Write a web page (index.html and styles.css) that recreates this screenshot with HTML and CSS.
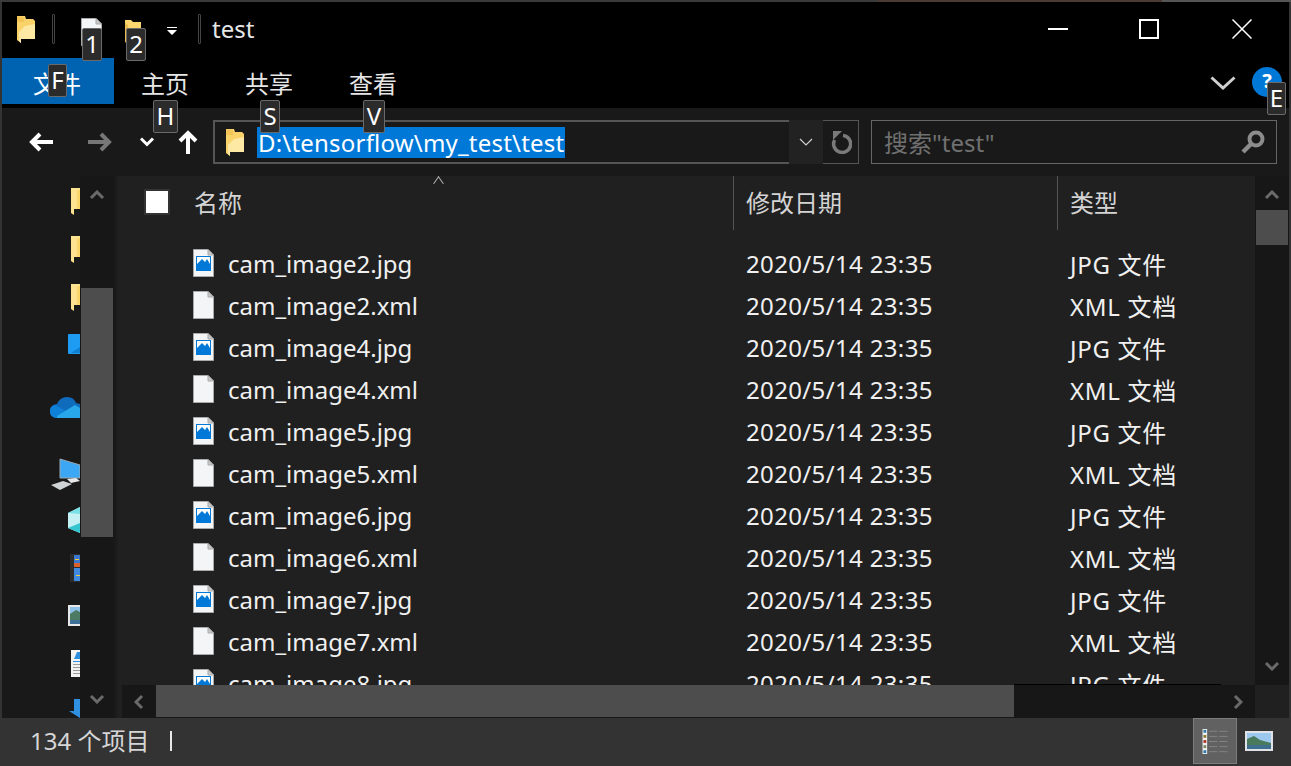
FILE: index.html
```html
<!DOCTYPE html>
<html lang="zh-CN">
<head>
    <meta charset="UTF-8">
    <title>test</title>
    <link rel="stylesheet" href="styles.css">
</head>
<body>
    <svg class="defs" width="0" height="0">
        <symbol id="file" viewBox="0 0 21 28">
            <path d="M.5.5H15L20.5 6V27.500H.5Z" fill="#f4f5f7" stroke="#a9a9a9"/>
            <path d="M15 .5V6H20.500Z" fill="#c9c9c9" stroke="#a9a9a9"/>
        </symbol>
        <symbol id="image" viewBox="0 0 21 28">
            <path d="M.5.5H15L20.5 6V27.500H.5Z" fill="#f4f5f7" stroke="#a9a9a9"/>
            <path d="M15 .5V6H20.500Z" fill="#c9c9c9" stroke="#a9a9a9"/>
            <path d="M3 7H18V22H3Z" fill="#0078d7"/>
            <path d="M4 8H17V15L14 10 12 13 9 10 4 15Z" fill="#fff"/>
        </symbol>
        <symbol id="folder" viewBox="0 0 18 27">
            <path d="M0 0H8L9 3H16L18 5V23H4V27L0 24Z" fill="#f9d36a"/>
            <path d="M8 10 18 8V23H4V27L2 25V16Z" fill="#fde9a4"/>
            <path d="M0 0 7 2V6L0 6Z" fill="#f2c455"/>
        </symbol>
        <symbol id="side-folder" viewBox="0 0 9 27">
            <path d="M0 0H9V21H3V27L0 25Z" fill="#fde292"/>
            <path d="M6 2H9V21H6Z" fill="#fbd568"/>
        </symbol>
        <symbol id="chevron" viewBox="0 0 16 10">
            <path d="M2 2 8 8 14 2" fill="none" stroke="currentColor" stroke-width="3"/>
        </symbol>
    </svg>

    <div class="edge-top"></div>
    <div class="window">
        <header class="titlebar">
            <svg class="title-folder"><use href="#folder"/></svg>
            <span class="qa-sep"></span>
            <svg class="qa-file"><use href="#file"/></svg>
            <svg class="qa-folder" viewBox="0 0 16 24">
                <path d="M0 0H6L8 2H16V14H0Z" fill="#fbd66e"/>
                <path d="M0 3 3 5V24L0 22Z" fill="#e9bb50"/>
            </svg>
            <svg class="qa-drop" viewBox="0 0 12 9">
                <path d="M1 0H11V1H1Z M1 3H11L6 8Z" fill="#fff"/>
            </svg>
            <span class="qa-sep qa-sep-last"></span>
            <span class="title-text">test</span>
            <div class="winbtns">
                <svg class="winbtn" viewBox="0 0 20 20"><path d="M0 10H20" stroke="#fff" stroke-width="2"/></svg>
                <svg class="winbtn" viewBox="0 0 20 20"><path d="M1 1H19V19H1Z" fill="none" stroke="#fff" stroke-width="2"/></svg>
                <svg class="winbtn winbtn-close" viewBox="0 0 20 20"><path d="M.5.5 19.500 19.500M19.500.5.5 19.500" stroke="#fff" stroke-width="1.500"/></svg>
            </div>
        </header>

        <nav class="ribbon">
            <span class="tab tab-file">文件</span>
            <span class="tab">主页</span>
            <span class="tab">共享</span>
            <span class="tab">查看</span>
            <svg class="ribbon-chevron" viewBox="0 0 26 14">
                <path d="M1.500 1.500 13 12 24.500 1.500" fill="none" stroke="#cfcfcf" stroke-width="3"/>
            </svg>
            <span class="help">?</span>
        </nav>

        <div class="navbar">
            <svg class="nav-arrow nav-back" viewBox="0 0 24 20"><path d="M24 10H3M11 2 3 10 11 18" fill="none" stroke="#fff" stroke-width="4"/></svg>
            <svg class="nav-arrow nav-forward" viewBox="0 0 24 20"><path d="M0 10H21M13 2 21 10 13 18" fill="none" stroke="#777" stroke-width="4"/></svg>
            <svg class="nav-recent" viewBox="0 0 16 10"><path d="M2 1.500 8 7.500 14 1.500" fill="none" stroke="#fff" stroke-width="3"/></svg>
            <svg class="nav-up" viewBox="0 0 20 24"><path d="M10 24V3M2 11 10 3 18 11" fill="none" stroke="#fff" stroke-width="4"/></svg>
            <div class="address">
                <svg class="address-folder"><use href="#folder"/></svg>
                <span class="address-text">D:\tensorflow\my_test\test</span>
                <span class="address-drop">
                    <svg class="address-chevron" viewBox="0 0 14 8"><path d="M1 1 7 7 13 1" fill="none" stroke="#d0d0d0" stroke-width="1.200"/></svg>
                </span>
            </div>
            <span class="refresh">
                <svg class="refresh-icon" viewBox="0 0 22 24">
                    <path d="M13 5.500A8.500 8.500 0 1 1 4.600 10" fill="none" stroke="#7a7a7a" stroke-width="3.500"/>
                    <path d="M3 1H12L3 10Z" fill="#7a7a7a"/>
                </svg>
            </span>
            <div class="search">
                <span class="search-text">搜索"test"</span>
                <svg class="search-icon" viewBox="0 0 24 24">
                    <circle cx="15" cy="9" r="6.500" fill="none" stroke="#8c8c8c" stroke-width="4"/>
                    <path d="M10 14 2 22" stroke="#8c8c8c" stroke-width="4.500"/>
                </svg>
            </div>
        </div>

        <div class="main">
            <aside class="sidebar">
                <div class="side-icons">
                    <svg class="si si-f1"><use href="#side-folder"/></svg>
                    <svg class="si si-f2"><use href="#side-folder"/></svg>
                    <svg class="si si-f2"><use href="#side-folder"/></svg>
                    <svg class="si si-desk" viewBox="0 0 12 20">
                        <path d="M0 1Q0 0 1 0H12V20H1Q0 20 0 19Z" fill="#1e9cf4"/>
                        <path d="M12 13V19H3Z" fill="#0f7fd0"/>
                    </svg>
                    <svg class="si si-cloud" viewBox="0 0 30 21">
                        <path d="M7 21Q0 21 0 14 0 8 7 7 10 0 17 0 24 0 26 6L30 7V21Z" fill="#0f6cbd"/>
                        <path d="M7 21Q0 21 0 14 0 9 5 8L18 15 10 21Z" fill="#0f80d7"/>
                        <path d="M7 21H30V11L25 8 7 19Z" fill="#28a8ea"/>
                    </svg>
                    <svg class="si si-pc" viewBox="0 0 29 32">
                        <path d="M9 1 29 7V20L9 20Z" fill="#3ba7f5" stroke="#9aa7b0"/>
                        <path d="M0 27 12 23 21 26 9 32Z" fill="#cfd3d6"/>
                        <path d="M16 21 25 20 29 23 20 25Z" fill="#e6e8ea"/>
                    </svg>
                    <svg class="si si-cube" viewBox="0 0 12 26">
                        <path d="M0 6 12 0V26L0 21Z" fill="#c5f1f4"/>
                        <path d="M0 21 12 16V26Z" fill="#37c6d0"/>
                        <path d="M0 6 12 0V7Z" fill="#7be0e6"/>
                    </svg>
                    <svg class="si si-video" viewBox="0 0 10 28">
                        <path d="M0 0H10V28H0Z" fill="#2c2c2c"/>
                        <path d="M4 1H10V13H4Z" fill="#3a78d0"/>
                        <path d="M4 9H10V13H4Z" fill="#d8602a"/>
                        <path d="M4 14H10V27H4Z" fill="#3f8ae0"/>
                        <path d="M5 5H9V6H5ZM6 21H10V22H6Z" fill="#f0d040"/>
                    </svg>
                    <svg class="si si-pic" viewBox="0 0 12 21">
                        <path d="M0 0H12V21H0Z" fill="#e8e8e8"/>
                        <path d="M2 2H12V19H2Z" fill="#8fc0e8"/>
                        <path d="M2 9 8 5 12 7V15H2Z" fill="#4c7a62"/>
                        <path d="M2 15H12V19H2Z" fill="#3e6f96"/>
                    </svg>
                    <svg class="si si-doc" viewBox="0 0 9 27">
                        <path d="M0 0H9V27H0Z" fill="#f2f2f2"/>
                        <path d="M3 9 6 2H9V9Z" fill="#2c8fe0"/>
                        <path d="M2 11H9V12H2Z" fill="#2c8fe0"/>
                        <path d="M2 14H9V15H2ZM2 17H9V18H2ZM2 20H9V21H2ZM2 23H9V24H2Z" fill="#999"/>
                    </svg>
                    <svg class="si si-down" viewBox="0 0 11 19">
                        <path d="M5 0H11V19L0 12H5Z" fill="#2f8fe0"/>
                    </svg>
                </div>
                <div class="vscroll vscroll-side">
                    <span class="sb-btn sb-btn-side"><svg class="sb-arrow sb-up"><use href="#chevron"/></svg></span>
                    <span class="sb-thumb sb-thumb-side"></span>
                    <span class="sb-fill"></span>
                    <span class="sb-btn sb-btn-side"><svg class="sb-arrow"><use href="#chevron"/></svg></span>
                </div>
            </aside>

            <section class="content">
                <div class="list-pane">
                    <div class="list-head">
                        <div class="head-cell head-name"><span class="checkbox"></span><span>名称</span><span class="sort-caret"></span></div>
                        <div class="head-cell head-date">修改日期</div>
                        <div class="head-cell head-type">类型</div>
                    </div>
                    <div class="rows">
                        <div class="row"><span class="cell-name"><svg class="file-icon"><use href="#image"/></svg>cam_image2.jpg</span><span class="cell-date">2020/5/14 23:35</span><span class="cell-type">JPG 文件</span></div>
                        <div class="row"><span class="cell-name"><svg class="file-icon"><use href="#file"/></svg>cam_image2.xml</span><span class="cell-date">2020/5/14 23:35</span><span class="cell-type">XML 文档</span></div>
                        <div class="row"><span class="cell-name"><svg class="file-icon"><use href="#image"/></svg>cam_image4.jpg</span><span class="cell-date">2020/5/14 23:35</span><span class="cell-type">JPG 文件</span></div>
                        <div class="row"><span class="cell-name"><svg class="file-icon"><use href="#file"/></svg>cam_image4.xml</span><span class="cell-date">2020/5/14 23:35</span><span class="cell-type">XML 文档</span></div>
                        <div class="row"><span class="cell-name"><svg class="file-icon"><use href="#image"/></svg>cam_image5.jpg</span><span class="cell-date">2020/5/14 23:35</span><span class="cell-type">JPG 文件</span></div>
                        <div class="row"><span class="cell-name"><svg class="file-icon"><use href="#file"/></svg>cam_image5.xml</span><span class="cell-date">2020/5/14 23:35</span><span class="cell-type">XML 文档</span></div>
                        <div class="row"><span class="cell-name"><svg class="file-icon"><use href="#image"/></svg>cam_image6.jpg</span><span class="cell-date">2020/5/14 23:35</span><span class="cell-type">JPG 文件</span></div>
                        <div class="row"><span class="cell-name"><svg class="file-icon"><use href="#file"/></svg>cam_image6.xml</span><span class="cell-date">2020/5/14 23:35</span><span class="cell-type">XML 文档</span></div>
                        <div class="row"><span class="cell-name"><svg class="file-icon"><use href="#image"/></svg>cam_image7.jpg</span><span class="cell-date">2020/5/14 23:35</span><span class="cell-type">JPG 文件</span></div>
                        <div class="row"><span class="cell-name"><svg class="file-icon"><use href="#file"/></svg>cam_image7.xml</span><span class="cell-date">2020/5/14 23:35</span><span class="cell-type">XML 文档</span></div>
                        <div class="row"><span class="cell-name"><svg class="file-icon"><use href="#image"/></svg>cam_image8.jpg</span><span class="cell-date">2020/5/14 23:35</span><span class="cell-type">JPG 文件</span></div>
                    </div>
                    <div class="hscroll">
                        <span class="hs-btn"><svg class="hs-arrow" viewBox="0 0 10 16"><path d="M8 2 2 8 8 14" fill="none" stroke="currentColor" stroke-width="3"/></svg></span>
                        <span class="hs-thumb"></span>
                        <span class="hs-fill"></span>
                        <span class="hs-btn"><svg class="hs-arrow" viewBox="0 0 10 16"><path d="M2 2 8 8 2 14" fill="none" stroke="currentColor" stroke-width="3"/></svg></span>
                    </div>
                </div>
                <div class="vscroll vscroll-main">
                    <span class="sb-btn sb-btn-top"><svg class="sb-arrow sb-up"><use href="#chevron"/></svg></span>
                    <span class="sb-thumb sb-thumb-main"></span>
                    <span class="sb-fill"></span>
                    <span class="sb-btn sb-btn-bottom"><svg class="sb-arrow"><use href="#chevron"/></svg></span>
                    <span class="sb-corner"></span>
                </div>
            </section>
        </div>

        <footer class="statusbar">
            <span class="status-count">134 个项目</span>
            <span class="status-sep"></span>
            <span class="view-details">
                <svg class="view-details-icon" viewBox="0 0 28 27">
                    <path d="M0 0H5V27H0Z" fill="#eee"/>
                    <path d="M1 1H4V4H1Z" fill="#2a7ab0"/>
                    <path d="M1 6.500H4V9.500H1Z" fill="#8a7a30"/>
                    <path d="M1 12H4V15H1Z" fill="#b03020"/>
                    <path d="M1 17.500H4V20.500H1Z" fill="#7a8a60"/>
                    <path d="M1 23H4V26H1Z" fill="#2a7ab0"/>
                    <path d="M7 2.500H16M18 2.500H27M7 8H16M18 8H27M7 13.500H16M18 13.500H27M7 19H16M18 19H27M7 24.500H16M18 24.500H27" stroke="#858585"/>
                </svg>
            </span>
            <svg class="view-large" viewBox="0 0 28 20">
                <path d="M0 0H28V20H0Z" fill="#dfe3e8"/>
                <path d="M2 2H26V18H2Z" fill="#9cc8ee"/>
                <path d="M2 8 9 5 15 9 26 12V14H2Z" fill="#4a7a5c"/>
                <path d="M2 14H26V18H2Z" fill="#3f6f8f"/>
            </svg>
        </footer>
    </div>
    <div class="edge-bottom">2020/5/14 1:23:25</div>

    <span class="keytip tip-1">1</span>
    <span class="keytip tip-2">2</span>
    <span class="keytip tip-f">F</span>
    <span class="keytip tip-h">H</span>
    <span class="keytip tip-s">S</span>
    <span class="keytip tip-v">V</span>
    <span class="keytip tip-e">E</span>
</body>
</html>
```

FILE: styles.css
```css
html, body {
    margin: 0;
    padding: 0;
}

body {
    position: relative;
    width: 1291px;
    height: 766px;
    overflow: hidden;
    background-color: #333;
    font-family: "Noto Sans", "Noto Sans CJK SC", sans-serif;
    font-size: 24px;
    color: #e6e6e6;
}

svg {
    display: block;
    flex: none;
}

.defs {
    position: absolute;
}

.edge-top {
    height: 2px;
    background: linear-gradient(90deg, #3a3a3a 68%, #4a3a33 68%, #4a3a33 90%, #555 90%);
}

.edge-bottom {
    height: 2px;
    overflow: hidden;
    padding-left: 995px;
    font-size: 22px;
    line-height: 28px;
    color: #8a8a8a;
}

.window {
    display: flex;
    flex-direction: column;
    width: 1287px;
    height: 762px;
    margin-left: 2px;
    background-color: #000;
}

/* title bar */
.titlebar {
    display: flex;
    align-items: center;
    height: 54px;
    padding-left: 15px;
    padding-bottom: 2px;
}

.title-folder {
    width: 18px;
    height: 27px;
}

.qa-sep {
    width: 3px;
    height: 30px;
    margin-left: 17px;
    border: 1px solid #444;
    box-sizing: border-box;
    border-radius: 1px;
}

.qa-file {
    width: 21px;
    height: 28px;
    margin-left: 26px;
    margin-top: 6px;
}

.qa-folder {
    width: 16px;
    height: 24px;
    margin-left: 23px;
    margin-top: 6px;
}

.qa-drop {
    width: 12px;
    height: 9px;
    margin-left: 25px;
    margin-top: 4px;
}

.qa-sep-last {
    margin-left: 20px;
}

.title-text {
    margin-left: 11px;
    line-height: 54px;
}

.winbtns {
    display: flex;
    align-items: center;
    gap: 71px;
    margin-left: auto;
    margin-right: 37px;
}

.winbtn {
    width: 20px;
    height: 20px;
}

.winbtn-close {
    margin-left: 2px;
}

/* ribbon */
.ribbon {
    display: flex;
    align-items: flex-start;
    height: 50px;
    color: #e6e6e6;
}

.tab {
    width: 104px;
    height: 46px;
    padding-right: 2px;
    box-sizing: border-box;
    line-height: 52px;
    text-align: center;
}

.tab-file {
    width: 112px;
    background-color: #0063b1;
    color: #fff;
}

.ribbon-chevron {
    width: 26px;
    height: 14px;
    margin-left: auto;
    margin-top: 18px;
}

.help {
    width: 30px;
    height: 30px;
    margin: 9px 7px 0 16px;
    border-radius: 50%;
    background-color: #0078d7;
    color: #fff;
    font-size: 20px;
    font-weight: bold;
    line-height: 28px;
    text-align: center;
}

/* address row */
.navbar {
    display: flex;
    align-items: center;
    height: 68px;
    background-color: #191919;
}

.nav-arrow {
    width: 24px;
    height: 20px;
}

.nav-back {
    margin-left: 27px;
}

.nav-forward {
    margin-left: 35px;
}

.nav-recent {
    width: 16px;
    height: 10px;
    margin-left: 27px;
}

.nav-up {
    width: 20px;
    height: 24px;
    margin-left: 23px;
}

.address {
    display: flex;
    align-items: center;
    box-sizing: border-box;
    width: 610px;
    height: 44px;
    margin-left: 15px;
    padding-left: 11px;
    border: 2px solid #555;
    border-right: none;
}

.address-folder {
    width: 18px;
    height: 27px;
}

.address-text {
    height: 31px;
    margin-left: 13px;
    padding: 0 1px;
    background-color: #0078d7;
    color: #fff;
    letter-spacing: 0.2px;
    line-height: 31px;
}

.address-drop {
    display: flex;
    align-items: center;
    justify-content: center;
    width: 34px;
    height: 44px;
    margin-left: auto;
    background-color: #222;
}

.address-chevron {
    width: 14px;
    height: 8px;
}

.refresh {
    display: flex;
    align-items: center;
    justify-content: center;
    box-sizing: border-box;
    width: 36px;
    height: 44px;
    border: 1px solid #555;
    border-left: none;
}

.refresh-icon {
    width: 22px;
    height: 24px;
}

.search {
    display: flex;
    align-items: center;
    justify-content: space-between;
    box-sizing: border-box;
    width: 406px;
    height: 44px;
    margin-left: 12px;
    padding: 0 11px 0 12px;
    border: 1px solid #666;
}

.search-text {
    margin-top: -2px;
    color: #707070;
}

.search-icon {
    width: 24px;
    height: 24px;
}

/* main area */
.main {
    display: flex;
    height: 542px;
    background-color: #202020;
}

.sidebar {
    display: flex;
    width: 114px;
    margin-right: 3px;
    background-color: #191919;
    box-shadow: 2px 0 0 #1d1d1d;
    overflow: hidden;
}

.side-icons {
    display: flex;
    flex-direction: column;
    align-items: flex-end;
    width: 78px;
}

.si-f1, .si-f2 {
    width: 9px;
    height: 27px;
}

.si-f1 {
    margin-top: 12px;
}

.si-f2 {
    margin-top: 21px;
}

.si-desk {
    width: 12px;
    height: 20px;
    margin-top: 23px;
}

.si-cloud {
    width: 30px;
    height: 21px;
    margin-top: 43px;
}

.si-pc {
    width: 29px;
    height: 32px;
    margin-top: 40px;
}

.si-cube {
    width: 12px;
    height: 26px;
    margin-top: 17px;
}

.si-video {
    width: 10px;
    height: 28px;
    margin-top: 21px;
}

.si-pic {
    width: 12px;
    height: 21px;
    margin-top: 23px;
}

.si-doc {
    width: 9px;
    height: 27px;
    margin-top: 24px;
}

.si-down {
    width: 11px;
    height: 19px;
    margin-top: 22px;
}

/* scrollbars */
.vscroll {
    display: flex;
    flex-direction: column;
    flex: none;
    background-color: #171717;
}

.vscroll-side {
    width: 34px;
}

.vscroll-main {
    width: 34px;
}

.sb-btn {
    display: flex;
    align-items: center;
    justify-content: center;
    flex: none;
    color: #6a6a6a;
}

.sb-btn-side {
    height: 38px;
}

.sb-btn-top {
    height: 38px;
    margin-bottom: -4px;
}

.sb-btn-bottom {
    height: 38px;
}

.sb-arrow {
    width: 16px;
    height: 10px;
}

.sb-up {
    transform: rotate(180deg);
}

.sb-thumb {
    flex: none;
    background-color: #4d4d4d;
}

.sb-thumb-side {
    height: 249px;
    margin: 74px 1px 0 1px;
}

.sb-thumb-main {
    height: 35px;
    margin: 0 1px;
}

.sb-fill {
    flex: 1;
}

.sb-corner {
    height: 33px;
    flex: none;
    background-color: #202020;
}

.content {
    display: flex;
    flex: 1;
    min-width: 0;
}

.list-pane {
    display: flex;
    flex-direction: column;
    flex: 1;
    min-width: 0;
}

.list-head {
    display: grid;
    grid-template-columns: 614px 324px 1fr;
    height: 54px;
    flex: none;
    color: #d4d4d4;
}

.head-cell {
    display: flex;
    align-items: center;
    height: 54px;
    box-sizing: border-box;
    padding-left: 12px;
    padding-bottom: 3px;
}

.head-name {
    position: relative;
    padding-left: 25px;
}

.head-date, .head-type {
    border-left: 1px solid #555;
}

.checkbox {
    box-sizing: border-box;
    width: 26px;
    height: 26px;
    margin-right: 24px;
    background-color: #fff;
    border: 2px solid #333;
}

.sort-caret {
    position: absolute;
    top: 3px;
    left: 315px;
    width: 8px;
    height: 8px;
    border-top: 1px solid #bbb;
    border-left: 1px solid #bbb;
    transform: rotate(45deg) skew(10deg, 10deg);
}

.rows {
    flex: 1;
    min-height: 0;
    padding-top: 12px;
    overflow: hidden;
}

.row {
    display: grid;
    grid-template-columns: 627px 324px 1fr;
    height: 42px;
    align-items: center;
    color: #f0f0f0;
    white-space: nowrap;
}

.cell-name {
    display: flex;
    align-items: center;
    padding-left: 74px;
}

.cell-date {
    letter-spacing: 0.35px;
}

.cell-type {
    letter-spacing: 0.7px;
}

.file-icon {
    width: 21px;
    height: 28px;
    margin-right: 14px;
}

.hscroll {
    display: flex;
    flex: none;
    height: 33px;
    margin-left: 3px;
    background-color: #171717;
}

.hs-btn {
    display: flex;
    align-items: center;
    justify-content: center;
    width: 34px;
    color: #6a6a6a;
}

.hs-arrow {
    width: 10px;
    height: 16px;
}

.hs-thumb {
    width: 858px;
    margin-bottom: 1px;
    background-color: #4d4d4d;
}

.hs-fill {
    position: relative;
    flex: 1;
}

.hs-fill::before {
    content: "";
    position: absolute;
    top: -1px;
    left: 0;
    width: 207px;
    height: 1px;
    background-color: #000;
}

/* status bar */
.statusbar {
    display: flex;
    align-items: center;
    flex: 1;
    padding-left: 28px;
    background-color: #333;
    color: #d6d6d6;
}

.status-count {
    margin-top: -3px;
}

.status-sep {
    width: 2px;
    height: 20px;
    margin-left: 21px;
    background-color: #e8e8e8;
}

.view-details {
    display: flex;
    align-items: center;
    justify-content: center;
    box-sizing: border-box;
    width: 44px;
    height: 46px;
    margin-left: auto;
    background-color: #616161;
    border: 1px solid #7d7d7d;
}

.view-details-icon {
    width: 27px;
    height: 25px;
}

.view-large {
    width: 28px;
    height: 20px;
    margin: 0 16px 0 8px;
}

/* key tips over the ribbon */
.keytip {
    position: absolute;
    box-sizing: border-box;
    height: 33px;
    background-color: #2b2b2b;
    border: 1px solid #6a6a6a;
    border-radius: 2px;
    color: #fff;
    font-size: 24px;
    line-height: 29px;
    text-align: center;
}

.tip-1 { left: 82px; top: 28px; width: 20px; }
.tip-2 { left: 126px; top: 28px; width: 20px; }
.tip-f { left: 48px; top: 64px; width: 19px; }
.tip-h { left: 153px; top: 100px; width: 25px; }
.tip-s { left: 260px; top: 100px; width: 20px; }
.tip-v { left: 363px; top: 100px; width: 22px; }
.tip-e { left: 1267px; top: 82px; width: 19px; }
```
